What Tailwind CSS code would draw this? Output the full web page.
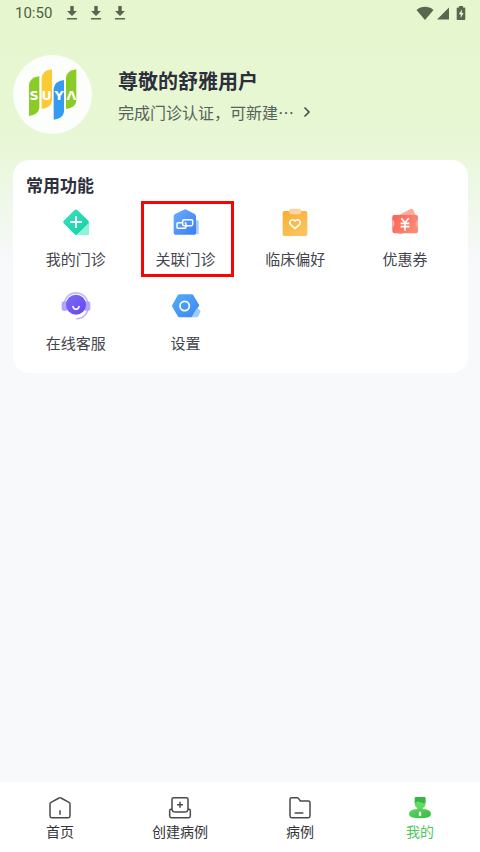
<!DOCTYPE html>
<html lang="zh-CN">
<head>
<meta charset="utf-8">
<meta name="viewport" content="width=device-width, initial-scale=1">
<title>我的</title>
<script src="https://cdn.jsdelivr.net/npm/@tailwindcss/browser@4"></script>
</head>
<body class="bg-[#f7f9fb] font-['Noto_Sans_CJK_SC',sans-serif] text-[#43444c]">
<div class="flex min-h-screen flex-col bg-[linear-gradient(to_bottom,#e6f7cf_0px,#e7f7d3_130px,#f7f9fb_264px)]">

  <!-- Status bar -->
  <div class="flex h-[26px] items-center pr-3.5 pl-[15px] font-[Roboto,sans-serif] text-[15px] text-[#4f5f48]">
    <span>10:50</span>
    <div class="ml-3 flex gap-2 text-[#57664f]">
      <svg class="size-4" viewBox="0 0 16 16" fill="currentColor" aria-hidden="true"><path d="M6.300 1h3.400v5H13l-5 5-5-5h3.300zM3 13h10v1.400H3z"/></svg>
      <svg class="size-4" viewBox="0 0 16 16" fill="currentColor" aria-hidden="true"><path d="M6.300 1h3.400v5H13l-5 5-5-5h3.300zM3 13h10v1.400H3z"/></svg>
      <svg class="size-4" viewBox="0 0 16 16" fill="currentColor" aria-hidden="true"><path d="M6.300 1h3.400v5H13l-5 5-5-5h3.300zM3 13h10v1.400H3z"/></svg>
    </div>
    <div class="ml-auto flex items-center text-[#57684f]">
      <svg class="h-4 w-[18px]" viewBox="0 0 18 16" fill="currentColor" aria-hidden="true"><path d="M.5 5C5.500 .8 12.500 .8 17.500 5L9 15z"/></svg>
      <svg class="ml-0.5 h-4 w-3.5" viewBox="0 0 14 16" fill="currentColor" aria-hidden="true"><path d="M13 2.500V14.500H1z"/></svg>
      <svg class="ml-1.5 h-4 w-2.5" viewBox="0 0 10 16" aria-hidden="true"><path fill="currentColor" d="M3 1h4v1.500h1.500q.8 0 .8.800V14q0 1-.8 1h-7q-.8 0-.8-1V3.300q0-.8.8-.8H3z"/><path fill="#e5f7ce" d="M5.800 4.500 2.800 9.300h1.900v3.700l2.900-5H5.800z"/></svg>
    </div>
  </div>

  <!-- Profile -->
  <header class="flex items-center gap-[26px] pt-[29px] pr-3 pl-[13px]">
    <svg class="size-[79px] shrink-0 rounded-full bg-[#fbfefa]" viewBox="0 0 237 237" role="img" aria-label="SUYA">
      <path fill="#8acb28" d="M48 90Q50 68 79 64V159Q77 179 48 183Z"/>
      <path fill="#fdc935" d="M86 69Q88 47 117 43V138Q115 158 86 162Z"/>
      <path fill="#369bf0" d="M122 101Q124 79 153 75V170Q151 190 122 194Z"/>
      <path fill="#8acb28" d="M159 69Q161 47 190 43V138Q188 158 159 162Z"/>
      <g fill="#fff" font-family="'DejaVu Sans', sans-serif" font-size="38" font-weight="700" text-anchor="middle"><text x="63" y="134">S</text><text x="101" y="134">U</text><text x="138" y="134">Y</text><text x="175" y="134">Λ</text></g>
    </svg>
    <div class="min-w-0 pt-1">
      <h1 class="text-xl leading-7 font-bold text-[#2d2f3d]">尊敬的舒雅用户</h1>
      <a href="#" class="mt-[3px] flex items-center gap-2 text-base leading-7 text-[#56625a]">
        <span>完成门诊认证，可新建⋯</span>
        <svg class="h-3 w-2.5" viewBox="0 0 10 12" fill="none" stroke="#43504a" stroke-width="1.600" aria-hidden="true"><path d="M2.500 1.500 7 6 2.500 10.500"/></svg>
      </a>
    </div>
  </header>

  <!-- Common functions -->
  <main class="flex-1 pt-[26px] pr-3 pl-[13px]">
    <section class="rounded-2xl bg-white px-2 pt-[13px] pb-[18px]">
      <h2 class="pl-[5px] text-[17px] leading-6 font-bold text-[#2f303d]">常用功能</h2>
      <div class="mt-2.5 grid grid-cols-4 gap-y-5 text-[15px] leading-6">
        <a href="#" class="flex flex-col items-center gap-2.5">
          <svg class="size-[30px]" viewBox="0 0 90 90" aria-hidden="true">
            <defs><linearGradient id="g1" x1="0" y1="0" x2="1" y2="1"><stop offset="0" stop-color="#35e0c0"/><stop offset="1" stop-color="#0fd3a5"/></linearGradient></defs>
            <path fill="#8ff3d6" d="M84 43V84H50Z"/>
            <path fill="url(#g1)" d="M41 9Q45 6 49 9L82 41Q85 45 82 49L50 82Q45 86 41 82L8 49Q5 45 8 41Z"/>
            <path stroke="#fff" stroke-width="6" d="M45 27V63M27 45H63"/>
          </svg>
          <span>我的门诊</span>
        </a>
        <a href="#" class="relative flex flex-col items-center gap-2.5">
          <svg class="size-[30px]" viewBox="3 0 90 90" aria-hidden="true">
            <defs><linearGradient id="g2" x1="0" y1="0" x2="1" y2="1"><stop offset="0" stop-color="#6cacfb"/><stop offset="1" stop-color="#397ff4"/></linearGradient></defs>
            <path fill="#a6c9fd" d="M68 40H82Q86 40 86 44V78Q86 82 82 82H68Z"/>
            <path fill="url(#g2)" d="M42 8Q46 6 50 8L74 21Q78 24 78 28V78Q78 83 73 83H16Q11 83 11 78V28Q11 24 15 21Z"/>
            <path fill="none" stroke="#fff" stroke-width="4.500" d="M36 47H24Q21 47 21 50V61Q21 64 24 64H44Q48 64 48 60V51Q48 47 44 47M54 56H42Q38 56 38 52V42Q38 38 42 38H65Q68 38 68 41V52Q68 56 64 56H54"/>
          </svg>
          <span>关联门诊</span>
          <span class="pointer-events-none absolute -top-1.5 -bottom-1.5 right-[7px] left-2.5 border-3 border-[#f60505]"></span>
        </a>
        <a href="#" class="flex flex-col items-center gap-2.5">
          <svg class="size-[30px]" viewBox="0 0 90 90" aria-hidden="true">
            <defs><linearGradient id="g3" x1="0" y1="0" x2="0.600" y2="1"><stop offset="0" stop-color="#f8ae31"/><stop offset="1" stop-color="#fcc35c"/></linearGradient></defs>
            <rect x="8" y="12" width="74" height="75" rx="5" fill="url(#g3)"/>
            <rect x="28" y="5" width="35" height="17" rx="4" fill="#fbd5a3"/>
            <path fill="none" stroke="#fff" stroke-width="4.500" stroke-linejoin="round" d="M45 65 32 53C24 44 36 32 45 42C54 32 66 44 58 53Z"/>
          </svg>
          <span>临床偏好</span>
        </a>
        <a href="#" class="flex flex-col items-center gap-2.5">
          <svg class="size-[30px]" viewBox="0 0 90 90" aria-hidden="true">
            <defs><linearGradient id="g4" x1="0" y1="0" x2="1" y2="0.500"><stop offset="0" stop-color="#fb6356"/><stop offset="1" stop-color="#fd8a75"/></linearGradient></defs>
            <path fill="#fdaa9c" d="M26 24 62 6Q67 4 70 9L77 25 84 38V62L32 82 20 78 6 62V34Z"/>
            <path fill="url(#g4)" d="M12 24H78Q84 24 84 29V37Q77 43 77 50Q77 57 84 63V73Q84 79 78 79H14Q7 79 7 73V63Q14 57 14 50Q14 43 7 37V29Q7 24 12 24Z"/>
            <path fill="none" stroke="#fff" stroke-width="5" d="M34 34 45 47 56 34M45 47V71M32 49H58M32 59H58"/>
          </svg>
          <span>优惠券</span>
        </a>
        <a href="#" class="flex flex-col items-center gap-2.5">
          <svg class="size-[30px]" viewBox="0 0 90 90" aria-hidden="true">
            <defs><linearGradient id="g5" x1="0" y1="0" x2="1" y2="1"><stop offset="0" stop-color="#7b6bf8"/><stop offset="1" stop-color="#6548ed"/></linearGradient></defs>
            <g fill="none" stroke="#c5b9fa" stroke-width="5"><path d="M10 40C14-6 76-6 81 40M81 48C80 70 68 82 46 84"/></g>
            <rect x="2" y="31" width="18" height="29" rx="8" fill="#b5a5f8"/><rect x="70" y="31" width="18" height="29" rx="8" fill="#b5a5f8"/>
            <circle cx="45" cy="41" r="30" fill="url(#g5)"/>
            <path fill="none" stroke="#fff" stroke-width="5" stroke-linecap="round" d="M36 47Q38 55 45 55Q52 55 54 47"/>
          </svg>
          <span>在线客服</span>
        </a>
        <a href="#" class="flex flex-col items-center gap-2.5">
          <svg class="size-[30px]" viewBox="0 0 90 90" aria-hidden="true">
            <defs><linearGradient id="g6" x1="0" y1="0" x2="1" y2="1"><stop offset="0" stop-color="#50adf9"/><stop offset="1" stop-color="#3e86f3"/></linearGradient></defs>
            <path fill="url(#g6)" d="M26 10H62Q66 10 68 14L85 43 64 79H26Q22 79 20 75L4 48Q2 45 4 42L20 13Q22 10 26 10Z"/>
            <path fill="#9ccbfd" d="M78 51 87 58Q90 60 88 63L81 77Q79 79 76 79H61Z"/>
            <circle cx="41" cy="45" r="14" fill="none" stroke="#fff" stroke-width="5"/>
          </svg>
          <span>设置</span>
        </a>
      </div>
    </section>
  </main>

  <!-- Tab bar -->
  <nav class="grid grid-cols-4 bg-white pt-3.5 pb-[11px] text-sm leading-5 text-[#33343a]">
    <a href="#" class="flex flex-col items-center gap-px">
      <svg class="size-6" viewBox="0 0 72 72" fill="none" stroke="#4a4a4e" stroke-width="4.500" stroke-linejoin="round" aria-hidden="true"><path d="M33 6Q36 4 39 6L63 19Q66 21 66 24V60Q66 65 61 65H11Q6 65 6 60V24Q6 21 9 19ZM36 43V56"/></svg>
      <span>首页</span>
    </a>
    <a href="#" class="flex flex-col items-center gap-px">
      <svg class="size-6" viewBox="0 0 72 72" fill="none" stroke="#4a4a4e" stroke-width="4.500" stroke-linejoin="round" aria-hidden="true"><path d="M12 10Q12 5 17 5H55Q60 5 60 10V38Q60 48 50 48H22Q12 48 12 38ZM36 17V35M27 26H45M12 40H9Q5 40 5 44V60Q5 65 10 65H62Q67 65 67 60V44Q67 40 63 40H60"/></svg>
      <span>创建病例</span>
    </a>
    <a href="#" class="flex flex-col items-center gap-px">
      <svg class="size-6" viewBox="0 0 72 72" fill="none" stroke="#4a4a4e" stroke-width="4.500" stroke-linejoin="round" aria-hidden="true"><path d="M11 5H27Q30 5 32 8L37 15H61Q66 15 66 20V60Q66 65 61 65H11Q6 65 6 60V10Q6 5 11 5ZM20 51H46"/></svg>
      <span>病例</span>
    </a>
    <a href="#" aria-current="page" class="flex flex-col items-center gap-px text-[#4dc95a]">
      <svg class="size-6" viewBox="0 0 72 72" aria-hidden="true">
        <defs><linearGradient id="g7" x1="0" y1="0" x2="1" y2="1"><stop offset="0" stop-color="#60d861"/><stop offset="1" stop-color="#38b944"/></linearGradient></defs>
        <path fill="url(#g7)" d="M28 34H44V40C58 39 69 44 69 54Q69 67 36 67Q3 67 3 54C3 44 14 39 28 40Z"/>
        <path fill="#5fdc60" d="M20 17H53Q54 38 36 38Q19 38 20 17Z"/>
        <path fill="#34b842" d="M20 7Q20 3 24 3H49Q53 3 53 7V19Q47 24 38 19Q27 15 20 22Z"/>
        <path fill="#fff" d="M33 47H39L40 58 36 61 32 58Z"/>
      </svg>
      <span>我的</span>
    </a>
  </nav>
</div>
</body>
</html>
